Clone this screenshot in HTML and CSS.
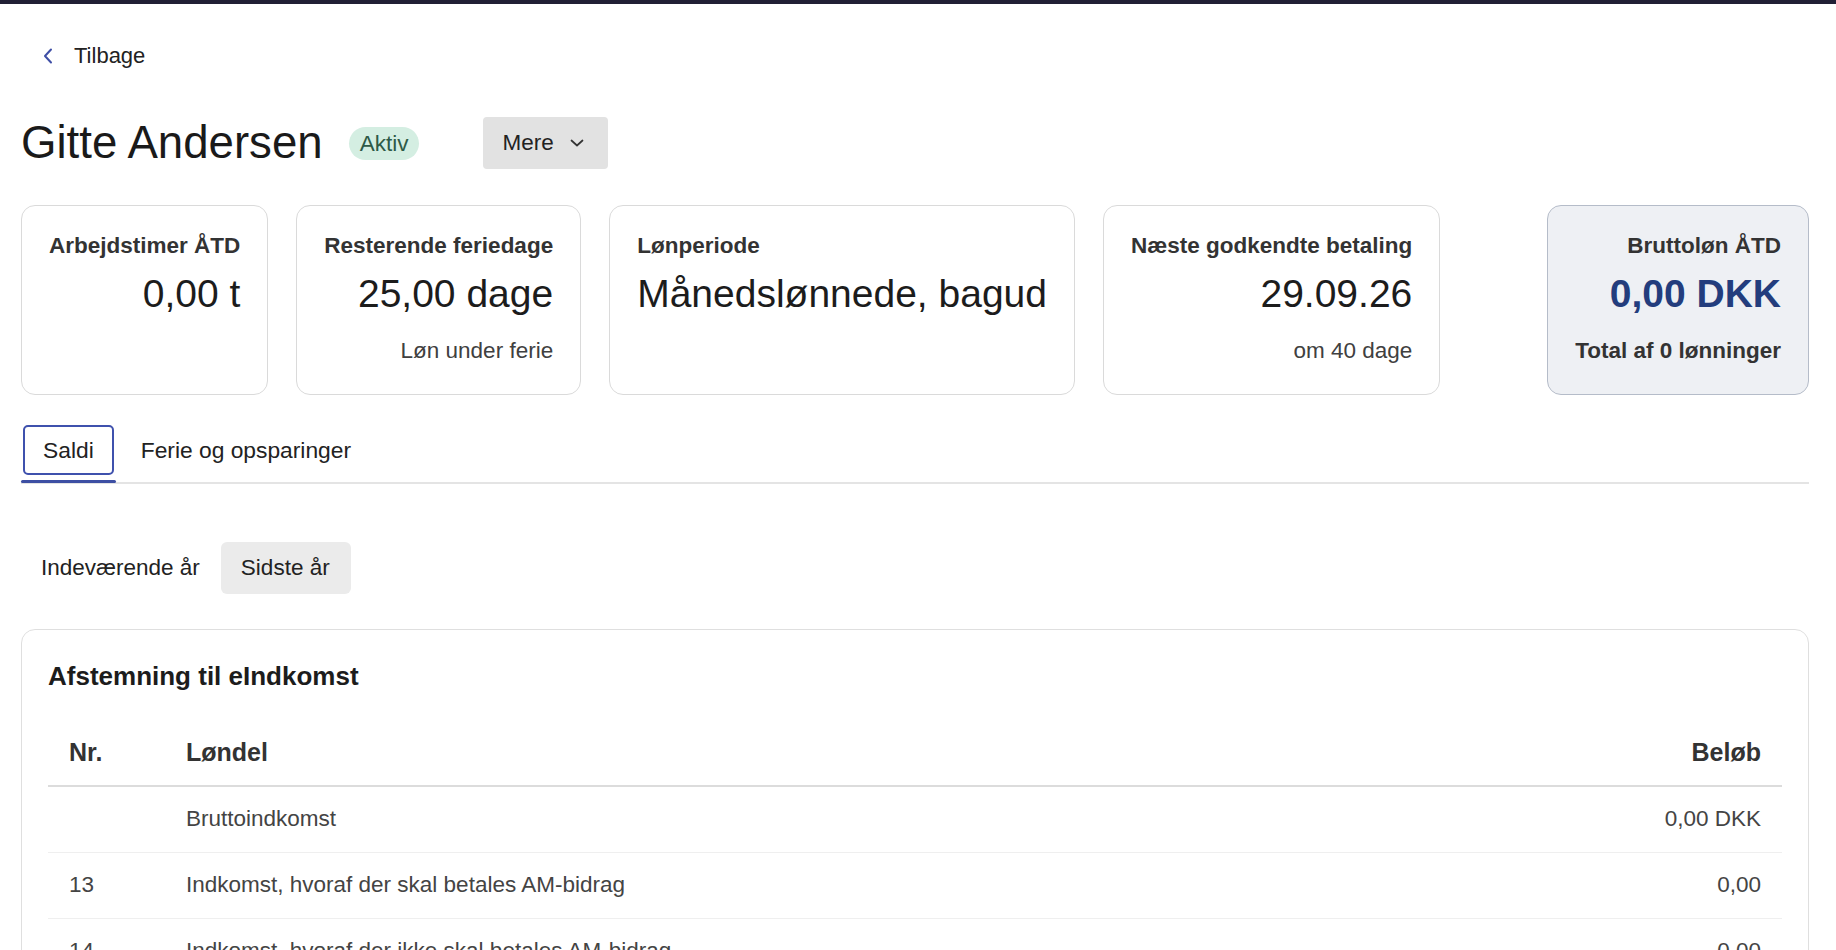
FILE: index.html
```html
<!DOCTYPE html>
<html lang="da">
<head>
<meta charset="utf-8">
<title>Gitte Andersen</title>
<link rel="stylesheet" href="styles.css">
</head>
<body>
<div class="topbar"></div>
<main class="page">
  <a class="back" href="#">
    <svg class="back-icon" width="12" height="18" viewBox="0 0 12 18" aria-hidden="true"><path d="M9 2.5 L3 9 L9 15.5"/></svg>
    <span>Tilbage</span>
  </a>

  <div class="title-row">
    <h1 class="name">Gitte Andersen</h1>
    <span class="badge">Aktiv</span>
    <button class="more" type="button">Mere
      <svg class="more-icon" width="14" height="8" viewBox="0 0 14 8" aria-hidden="true"><path d="M1.5 1.5 L7 6.5 L12.5 1.5"/></svg>
    </button>
  </div>

  <section class="stats">
    <div class="stat">
      <div class="stat-label">Arbejdstimer ÅTD</div>
      <div class="stat-value">0,00 t</div>
    </div>
    <div class="stat">
      <div class="stat-label">Resterende feriedage</div>
      <div class="stat-value">25,00 dage</div>
      <div class="stat-sub">Løn under ferie</div>
    </div>
    <div class="stat stat-left">
      <div class="stat-label">Lønperiode</div>
      <div class="stat-value">Månedslønnede, bagud</div>
    </div>
    <div class="stat">
      <div class="stat-label">Næste godkendte betaling</div>
      <div class="stat-value">29.09.26</div>
      <div class="stat-sub">om 40 dage</div>
    </div>
    <div class="stat stat-total">
      <div class="stat-label">Bruttoløn ÅTD</div>
      <div class="stat-value stat-value-total">0,00 DKK</div>
      <div class="stat-sub stat-sub-total">Total af 0 lønninger</div>
    </div>
  </section>

  <nav class="tabs">
    <div class="tab tab-active"><span class="tab-label">Saldi</span></div>
    <div class="tab"><span class="tab-label">Ferie og opsparinger</span></div>
  </nav>

  <div class="segmented">
    <span class="segment">Indeværende år</span>
    <span class="segment segment-selected">Sidste år</span>
  </div>

  <section class="panel">
    <h2 class="panel-title">Afstemning til eIndkomst</h2>
    <table class="table">
      <thead>
        <tr>
          <th class="col-nr">Nr.</th>
          <th>Løndel</th>
          <th class="num">Beløb</th>
        </tr>
      </thead>
      <tbody>
        <tr>
          <td class="col-nr"></td>
          <td>Bruttoindkomst</td>
          <td class="num">0,00 DKK</td>
        </tr>
        <tr>
          <td class="col-nr">13</td>
          <td>Indkomst, hvoraf der skal betales AM-bidrag</td>
          <td class="num">0,00</td>
        </tr>
        <tr>
          <td class="col-nr">14</td>
          <td>Indkomst, hvoraf der ikke skal betales AM-bidrag</td>
          <td class="num">0,00</td>
        </tr>
      </tbody>
    </table>
  </section>
</main>
</body>
</html>
```

FILE: styles.css
```css
* { box-sizing: border-box; }

html, body {
  margin: 0;
  padding: 0;
  background: #ffffff;
}

body {
  font-family: "Liberation Sans", Arial, Helvetica, sans-serif;
  color: #1f1f1f;
  overflow: hidden;
}

.topbar {
  height: 4px;
  background: #211f35;
}

.page {
  padding: 0 27px 0 21px;
}

/* Back link */
.back {
  display: inline-flex;
  align-items: center;
  gap: 20px;
  margin-top: 37px;
  margin-left: 21px;
  height: 30px;
  font-size: 22px;
  line-height: 30px;
  color: #222222;
  text-decoration: none;
}

.back-icon path {
  fill: none;
  stroke: #3f4fa6;
  stroke-width: 2;
  stroke-linecap: round;
  stroke-linejoin: round;
}

/* Title row */
.title-row {
  display: flex;
  align-items: center;
  margin-top: 46px;
  height: 52px;
}

.name {
  margin: 0;
  font-size: 45.6px;
  line-height: 52px;
  font-weight: 400;
  color: #1a1a1a;
}

.badge {
  margin-left: 26px;
  height: 33px;
  padding: 0 11px;
  border-radius: 17px;
  background: #d4eee2;
  color: #2e5a47;
  font-size: 22.5px;
  line-height: 33px;
}

.more {
  display: inline-flex;
  align-items: center;
  gap: 16px;
  margin-left: 64px;
  height: 52px;
  padding: 0 24px 0 19px;
  border: none;
  border-radius: 4px;
  background: #e2e2e2;
  color: #222222;
  font-family: inherit;
  font-size: 22.5px;
}

.more-icon path {
  fill: none;
  stroke: #333333;
  stroke-width: 1.7;
  stroke-linecap: round;
  stroke-linejoin: round;
}

/* Stat cards */
.stats {
  display: flex;
  gap: 28px;
  margin-top: 36px;
}

.stat {
  display: flex;
  flex-direction: column;
  align-items: flex-end;
  height: 190px;
  padding: 24px 27px 0 27px;
  border: 1px solid #dadada;
  border-radius: 14px;
  background: #ffffff;
  text-align: right;
}

.stat-left {
  align-items: flex-start;
  text-align: left;
}

.stat-total {
  margin-left: auto;
  background: #eef0f4;
  border-color: #b5bcc9;
}

.stat-label {
  font-size: 22.5px;
  line-height: 31px;
  font-weight: 700;
  color: #333333;
  white-space: nowrap;
}

.stat-value {
  margin-top: 9px;
  font-size: 39px;
  line-height: 47px;
  color: #1c1c1c;
  white-space: nowrap;
}

.stat-value-total {
  font-weight: 700;
  color: #233d7d;
}

.stat-sub {
  margin-top: 18px;
  font-size: 22.5px;
  line-height: 31px;
  color: #404040;
  white-space: nowrap;
}

.stat-sub-total {
  font-weight: 700;
  color: #333333;
}

/* Tabs */
.tabs {
  display: flex;
  gap: 3px;
  margin-top: 30px;
  border-bottom: 2px solid #e4e4e4;
}

.tab {
  position: relative;
  padding: 0 2px 7px 2px;
}

.tab-label {
  display: block;
  height: 50px;
  padding: 0 18px;
  border: 2px solid transparent;
  border-radius: 5px;
  font-size: 22.8px;
  line-height: 46px;
  color: #222222;
}

.tab-active .tab-label {
  border-color: #3f51ad;
}

.tab-active::after {
  content: "";
  position: absolute;
  left: 0;
  right: 0;
  bottom: -1px;
  height: 3px;
  border-radius: 2px;
  background: #3d4fa3;
}

/* Segmented control */
.segmented {
  display: inline-flex;
  margin-top: 58px;
}

.segment {
  height: 52px;
  padding: 0 21px 0 20px;
  border-radius: 6px;
  font-size: 22.5px;
  line-height: 52px;
  color: #222222;
}

.segment-selected {
  background: #ebebeb;
}

/* Panel with table */
.panel {
  margin-top: 35px;
  padding: 28px 26px 0 26px;
  border: 1px solid #dfdfdf;
  border-radius: 14px;
}

.panel-title {
  margin: 0;
  font-size: 26px;
  line-height: 36px;
  font-weight: 700;
  color: #1c1c1c;
}

.table {
  width: 100%;
  margin-top: 26px;
  border-collapse: collapse;
}

.table th,
.table td {
  height: 66px;
  padding: 0 21px;
  text-align: left;
  vertical-align: middle;
}

.table th {
  font-size: 25px;
  font-weight: 700;
  color: #333333;
  border-bottom: 2px solid #dcdcdc;
}

.table td {
  font-size: 22.5px;
  color: #444444;
  border-bottom: 1px solid #efefef;
}

.table .col-nr {
  width: 117px;
}

.table .num {
  text-align: right;
}
```
